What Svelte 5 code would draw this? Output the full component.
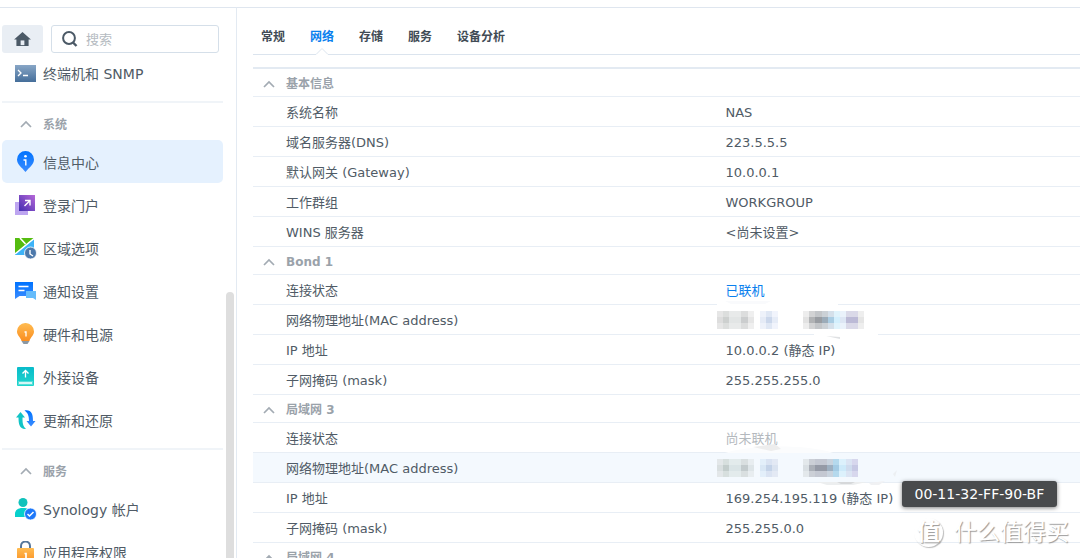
<script lang="ts">
  type Row = { label: string; value: string; kind?: string; hover?: boolean };

  const tabs = ['常规', '网络', '存储', '服务', '设备分析'];
  let activeTab = $state('网络');
  let activeItem = $state('信息中心');
  let search = $state('');

  const groups = [
    { title: '', items: [{ icon: 'terminal', name: '终端机和 SNMP' }] },
    {
      title: '系统',
      items: [
        { icon: 'info', name: '信息中心' },
        { icon: 'portal', name: '登录门户' },
        { icon: 'region', name: '区域选项' },
        { icon: 'notify', name: '通知设置' },
        { icon: 'power', name: '硬件和电源' },
        { icon: 'device', name: '外接设备' },
        { icon: 'update', name: '更新和还原' }
      ]
    },
    {
      title: '服务',
      items: [
        { icon: 'account', name: 'Synology 帐户' },
        { icon: 'lock', name: '应用程序权限' }
      ]
    }
  ];

  const sections: { title: string; rows: Row[] }[] = [
    {
      title: '基本信息',
      rows: [
        { label: '系统名称', value: 'NAS' },
        { label: '域名服务器(DNS)', value: '223.5.5.5' },
        { label: '默认网关 (Gateway)', value: '10.0.0.1' },
        { label: '工作群组', value: 'WORKGROUP' },
        { label: 'WINS 服务器', value: '<尚未设置>' }
      ]
    },
    {
      title: 'Bond 1',
      rows: [
        { label: '连接状态', value: '已联机', kind: 'online' },
        { label: '网络物理地址(MAC address)', value: '', kind: 'masked' },
        { label: 'IP 地址', value: '10.0.0.2 (静态 IP)' },
        { label: '子网掩码 (mask)', value: '255.255.255.0' }
      ]
    },
    {
      title: '局域网 3',
      rows: [
        { label: '连接状态', value: '尚未联机', kind: 'offline' },
        { label: '网络物理地址(MAC address)', value: '', kind: 'masked', hover: true },
        { label: 'IP 地址', value: '169.254.195.119 (静态 IP)' },
        { label: '子网掩码 (mask)', value: '255.255.0.0' }
      ]
    },
    { title: '局域网 4', rows: [] }
  ];

  // mosaic columns: x, width, edge colour, middle colour
  const mosaic: [number, number, string, string][] = [
    [0, 6, '#e6e6e6', '#dddddd'],
    [6, 6, '#dcdedd', '#cdd0cf'],
    [12, 12, '#e8eaea', '#e2e5e5'],
    [24, 7, '#dcdddd', '#cbcdce'],
    [31, 6, '#efefef', '#e6e6e6'],
    [43, 6, '#eef2fa', '#e5ebf6'],
    [49, 6, '#dfe7f4', '#cbd7eb'],
    [55, 6, '#f1f4fc', '#e6ecf7'],
    [86, 6, '#ededed', '#e2e2e2'],
    [92, 6, '#d2d3d4', '#b1b3b5'],
    [98, 7, '#c3c6c9', '#999da2'],
    [105, 6, '#cbd1d6', '#9cacb9'],
    [111, 6, '#d5e0ea', '#aacde3'],
    [117, 6, '#e0f3fc', '#d3effd'],
    [123, 6, '#eaf2fb', '#dde6f4'],
    [129, 12, '#dad9e8', '#bcbad6'],
    [141, 6, '#eeeeee', '#e5e5e5']
  ];

  const mosaicHover: [number, number, string, string][] = [
    [0, 6, '#e3e7e9', '#d9dfe0'],
    [6, 6, '#d7dfde', '#c3cdcc'],
    [12, 12, '#e3ebec', '#dae4e6'],
    [24, 7, '#d9dfe0', '#c3cbcd'],
    [31, 6, '#e8edf0', '#dee5e8'],
    [43, 6, '#e3effa', '#d9e7f5'],
    [49, 6, '#dae3f2', '#c4d3e8'],
    [55, 6, '#e3e9f4', '#dae3f0'],
    [86, 6, '#e3e8eb', '#d9dfe3'],
    [92, 6, '#cbcfd6', '#abb0b8'],
    [98, 12, '#c4c8d2', '#959aa6'],
    [110, 6, '#c9d3de', '#9eb0c1'],
    [116, 6, '#b5d9ed', '#a4cbe4'],
    [122, 7, '#dcf1fc', '#cdeafa'],
    [129, 6, '#dbe4f3', '#cfdcee'],
    [135, 6, '#d7d7ed', '#c7c9e4']
  ];
</script>

{#snippet icon(name: string)}
  <svg class="icon" viewBox="0 0 22 22" aria-hidden="true">
    {#if name === 'terminal'}
      <rect x="0" y="3" width="21" height="17" fill="url(#g-steel)" />
      <path d="M3 8l3 3-3 3M8 13.500h5" fill="none" stroke="#fff" stroke-width="1.300" />
    {:else if name === 'info'}
      <path d="M10.500 0a8.500 8.500 0 0 1 8.500 8.500c0 5-5 8-8.500 12.500C7 16.500 2 13.500 2 8.500A8.500 8.500 0 0 1 10.500 0z" fill="url(#g-blue)" />
      <circle cx="10.500" cy="5.300" r="1.300" fill="#fff" />
      <path d="M8.500 9h2.300v5.500" fill="none" stroke="#fff" stroke-width="1.400" />
    {:else if name === 'portal'}
      <rect x="0" y="8" width="13" height="13" fill="#bda5f0" />
      <rect x="4" y="1" width="16" height="16" fill="url(#g-purple)" />
      <path d="M9.500 12l5-5M10 6.500h5V11.500" fill="none" stroke="#fff" stroke-width="1.400" />
    {:else if name === 'region'}
      <path d="M0 1h19L0 17z" fill="#55bc10" />
      <path d="M19 2v16H0v-1z" fill="#3db3f8" />
      <path d="M0 17L19 1.500M5 1l5.500 6" fill="none" stroke="#fff" stroke-width="1.600" />
      <circle cx="15.500" cy="16" r="6" fill="#4d79ab" stroke="#fff" stroke-width=".8" />
      <path d="M15 13v4l3 2" fill="none" stroke="#fff" stroke-width="1.400" />
    {:else if name === 'notify'}
      <path d="M0 2h18v14H4.500L0 19z" fill="url(#g-blue)" />
      <path d="M3.500 6.500h10M3.500 10.500h6" stroke="#fff" stroke-width="1.300" />
      <path d="M11 11h10v9l-3-2h-7z" fill="#66bcfb" />
    {:else if name === 'power'}
      <path d="M10.500 0a8.300 8.300 0 0 1 8.500 8.500c0 4-3.500 5.500-4.500 9.500h-8C5.500 14 2 12.500 2 8.500A8.300 8.300 0 0 1 10.500 0z" fill="url(#g-orange)" />
      <path d="M6.500 18h8l-2 3h-4z" fill="#8b98a3" />
      <path d="M9.500 9h1.500v4.500" fill="none" stroke="#fff" stroke-width="1.300" />
    {:else if name === 'device'}
      <rect x="2" y="1" width="17" height="19" rx="1" fill="url(#g-teal)" />
      <path d="M3 15h15v4H3z" fill="#fff" opacity=".25" />
      <path d="M10.500 11.500V5M7.500 7.500l3-3 3 3" fill="none" stroke="#fff" stroke-width="1.300" />
      <path d="M4 17h13" stroke="#fff" stroke-width="1.500" />
    {:else if name === 'update'}
      <path d="M1 8.500L5.500 3 10 8.500H7.500c0 5 0 8 3.500 11.500C4.500 20.500 3.500 15 3.500 8.500z" fill="#12c4c6" />
      <path d="M9.500 1.500C16.500.5 18 5 18 12h2.500L16 17.500 11.500 12H14c0-5-1-8-4.500-10.500z" fill="url(#g-blue)" />
    {:else if name === 'account'}
      <circle cx="8" cy="4.500" r="4.500" fill="#10c2bb" />
      <path d="M0 19v-3c0-4 3-6 8-6s8 2 8 6v3z" fill="#07d0cc" />
      <circle cx="15.500" cy="16" r="6" fill="#1d78fa" stroke="#fff" stroke-width=".8" />
      <path d="M12.500 16l2 2 4-4" fill="none" stroke="#fff" stroke-width="1.500" />
    {:else if name === 'lock'}
      <path d="M6 9V5a4.500 4.500 0 0 1 9 0v4" fill="none" stroke="#56779b" stroke-width="2" />
      <rect x="2" y="7" width="17" height="15" rx="1" fill="url(#g-orange)" />
      <path d="M9.500 12.500H11v5" fill="none" stroke="#fff" stroke-width="1.700" />
    {/if}
  </svg>
{/snippet}

{#snippet chevron()}
  <svg class="chevron" viewBox="0 0 12 8" aria-hidden="true">
    <path d="M1 7l5-5 5 5" fill="none" stroke="#a3abb3" stroke-width="1.700" />
  </svg>
{/snippet}

{#snippet mask(hover: boolean)}
  <svg class="mask" viewBox="0 0 190 48" aria-hidden="true">
    {#if hover}
      <path d="M8 10C30 2 90 1 116 10z" fill="#fbfcfd" />
      <path d="M36 4l22-3 6 5-10 2z" fill="#ededed" />
      <path d="M100 39h50l-14 3h-26z" fill="#eceeef" />
      <path d="M120 39h18l-4 2h-10z" fill="#d6d8da" />
      <path d="M152 40l16-2-6 4h-8z" fill="#f0f1f3" />
      <path d="M176 31l4-4-2 7z" fill="#eceff2" />
    {:else}
      <path d="M0 8h121v4H0zM97 37h64v5H97z" fill="#fff" />
      <path d="M8 6h46l-6 3H14z" fill="#f9fafc" />
      <path d="M109 41l14 1v2z" fill="#dfe1e3" />
    {/if}
    {#each hover ? mosaicHover : mosaic as [x, width, edge, middle]}
      <rect {x} y="16" {width} height="18" fill={edge} />
      <rect {x} y="22" {width} height="6" fill={middle} />
    {/each}
  </svg>
{/snippet}

<svg class="defs" width="0" height="0" aria-hidden="true">
  <defs>
    <linearGradient id="g-blue" x2="0" y2="1"><stop stop-color="#0073ff" /><stop offset="1" stop-color="#3b8cff" /></linearGradient>
    <linearGradient id="g-steel" x2="0" y2="1"><stop stop-color="#88a6c6" /><stop offset="1" stop-color="#456e9a" /></linearGradient>
    <linearGradient id="g-purple" x1="1" x2="0" y2="1"><stop stop-color="#b768d8" /><stop offset="1" stop-color="#432db0" /></linearGradient>
    <linearGradient id="g-orange" x2="0" y2="1"><stop stop-color="#ffbc52" /><stop offset="1" stop-color="#fa8e20" /></linearGradient>
    <linearGradient id="g-teal" x2="0" y2="1"><stop stop-color="#09bbca" /><stop offset="1" stop-color="#20d6cc" /></linearGradient>
  </defs>
</svg>

<div class="window">
  <aside>
    <div class="toolbar">
      <button class="home" aria-label="主页">
        <svg viewBox="0 0 18 16" aria-hidden="true">
          <path d="M9 0l9 8h-2.500v7h-13V8H0z" fill="#4b5966" />
          <path d="M7 9h4v5H7z" fill="#e9eef4" />
        </svg>
      </button>
      <label class="search">
        <svg viewBox="0 0 16 16" aria-hidden="true">
          <circle cx="7" cy="7" r="5.900" fill="none" stroke="#4b5966" stroke-width="2" />
          <path d="M11 11.500l3.500 3.500" stroke="#4b5966" stroke-width="2.400" />
        </svg>
        <input type="text" aria-label="搜索" placeholder="搜索" bind:value={search} />
      </label>
    </div>
    <nav>
      {#each groups as group}
        <div class="group">
          {#if group.title}
            <button class="group-title">{@render chevron()}{group.title}</button>
          {/if}
          {#each group.items as item}
            <button class="item" class:active={item.name === activeItem} onclick={() => (activeItem = item.name)}>
              {@render icon(item.icon)}{item.name}
            </button>
          {/each}
        </div>
      {/each}
    </nav>
    <div class="scrollbar"></div>
  </aside>

  <main>
    <div class="tabs" role="tablist">
      {#each tabs as tab}
        <button role="tab" aria-selected={tab === activeTab} class:active={tab === activeTab} onclick={() => (activeTab = tab)}>
          {tab}
          {#if tab === activeTab}
            <svg class="notch" viewBox="0 0 14 8" aria-hidden="true">
              <path d="M0 8l7-7 7 7z" fill="#fff" />
              <path d="M0 7.500h1l6-6 6 6h1" fill="none" stroke="#dbe4ee" />
            </svg>
          {/if}
        </button>
      {/each}
    </div>
    <table>
      {#each sections as section}
        <tbody>
          <tr>
            <th colspan="2"><button class="section-title">{@render chevron()}{section.title}</button></th>
          </tr>
          {#each section.rows as row}
            <tr class:hover={row.hover}>
              <td class="label">{row.label}</td>
              <td class="value {row.kind ?? ''}">
                {row.value}
                {#if row.kind === 'masked'}{@render mask(!!row.hover)}{/if}
                {#if row.hover}<span class="tooltip" role="tooltip">00-11-32-FF-90-BF</span>{/if}
              </td>
            </tr>
          {/each}
        </tbody>
      {/each}
    </table>
  </main>

  <div class="watermark"><span class="seal">值</span>什么值得买</div>
</div>

<style>
  :global(body) {
    background: #fff;
  }

  .defs {
    position: absolute;
  }

  .window {
    position: relative;
    display: flex;
    box-sizing: border-box;
    height: 100vh;
    padding-top: 7px;
    overflow: hidden;
    color: #505b66;
    font-family: 'DejaVu Sans', 'Noto Sans CJK SC', sans-serif;
    font-size: 13px;
  }

  button {
    padding: 0;
    border: none;
    background: none;
    color: inherit;
    font: inherit;
    text-align: left;
    cursor: pointer;
  }

  aside {
    position: relative;
    flex: none;
    display: flex;
    flex-direction: column;
    width: 236px;
    border-top: 1px solid #dfe6ef;
    border-right: 1px solid #e3eaf2;
  }

  .toolbar {
    display: flex;
    gap: 8px;
    padding: 17px 17px 0 2px;
  }

  .home {
    flex: none;
    display: flex;
    align-items: center;
    justify-content: center;
    width: 41px;
    height: 28px;
    border-radius: 3px;
    background: #e9eef4;
  }

  .home svg {
    width: 17px;
    height: 15px;
  }

  .search {
    flex: 1;
    display: flex;
    align-items: center;
    gap: 8px;
    box-sizing: border-box;
    min-width: 0;
    height: 28px;
    padding: 0 10px;
    border: 1px solid #d5dfe9;
    border-radius: 3px;
  }

  .search svg {
    flex: none;
    width: 16px;
    height: 16px;
  }

  .search input {
    flex: 1;
    min-width: 0;
    padding: 0;
    border: none;
    outline: none;
    background: none;
    color: inherit;
    font: inherit;
  }

  .search input::placeholder {
    color: #b5bbc1;
  }

  nav {
    flex: 1;
    min-height: 0;
    margin-top: -2px;
    padding: 0 13px 0 2px;
    overflow: hidden;
  }

  .group {
    padding-bottom: 7px;
  }

  .group + .group {
    border-top: 2px solid #f0f4f8;
  }

  .group-title {
    display: flex;
    align-items: center;
    gap: 11px;
    width: 100%;
    height: 37px;
    padding: 4px 0 0 18px;
    color: #9aa2aa;
    font-size: 12px;
    font-weight: bold;
  }

  .item {
    display: flex;
    align-items: center;
    gap: 6px;
    width: 100%;
    height: 43px;
    padding-left: 13px;
    border-radius: 5px;
    font-size: 14px;
  }

  .item.active {
    background: #e5f1fe;
  }

  .icon {
    flex: none;
    width: 22px;
    height: 22px;
  }

  .chevron {
    flex: none;
    width: 12px;
    height: 8px;
  }

  .scrollbar {
    position: absolute;
    top: 284px;
    right: 2px;
    bottom: -8px;
    width: 8px;
    border-radius: 4px;
    background: #dedede;
  }

  main {
    flex: 1;
    min-width: 0;
    padding: 17px 0 0 16px;
    border-top: 1px solid #dfe6ef;
  }

  .tabs {
    display: flex;
    gap: 25px;
    height: 29px;
    padding-left: 8px;
    margin-bottom: 12px;
    border-bottom: 1px solid #dbe4ee;
  }

  .tabs button {
    position: relative;
    padding-bottom: 8px;
    font-size: 12px;
    font-weight: bold;
    color: #414b55;
  }

  .tabs .active {
    color: #0a80ee;
  }

  .notch {
    position: absolute;
    bottom: -1px;
    left: calc(50% - 7px);
    width: 14px;
    height: 8px;
  }

  table {
    width: 100%;
    border-top: 2px solid #e3eaf2;
    border-spacing: 0;
    table-layout: fixed;
  }

  th,
  td {
    box-sizing: border-box;
    height: 30px;
    padding: 2px 0 0;
    border-bottom: 1px solid #e8eef5;
    line-height: 20px;
    white-space: nowrap;
  }

  th {
    height: 28px;
    text-align: left;
  }

  .section-title {
    display: flex;
    align-items: center;
    gap: 11px;
    padding-left: 10px;
    color: #9aa2aa;
    font-size: 12px;
    font-weight: bold;
  }

  .label {
    padding-left: 33px;
  }

  .value {
    position: relative;
    padding-left: 59px;
  }

  .online {
    color: #0a80ee;
  }

  .offline {
    color: #b4b9be;
  }

  .hover td {
    background: #f4f9fe;
  }

  .mask {
    position: absolute;
    z-index: 1;
    top: -10px;
    left: 50px;
    width: 190px;
    height: 48px;
  }

  .tooltip {
    position: absolute;
    z-index: 2;
    top: 28px;
    left: 235px;
    padding: 3px 13px;
    border-radius: 3px;
    background: #494b4d;
    box-shadow: 0 1px 4px rgba(0, 0, 0, 0.5);
    color: #fff;
    font-size: 14px;
  }

  .watermark {
    position: absolute;
    right: 11px;
    bottom: 10px;
    display: flex;
    align-items: center;
    gap: 11px;
    color: #fff;
    font-size: 23px;
    line-height: 32px;
    text-shadow: 1px 1px 1px #999;
  }

  .seal {
    width: 29px;
    height: 29px;
    border-radius: 50%;
    box-shadow: 1px 1px 1px #bbb;
    font-weight: bold;
    line-height: 29px;
    text-align: center;
  }
</style>
